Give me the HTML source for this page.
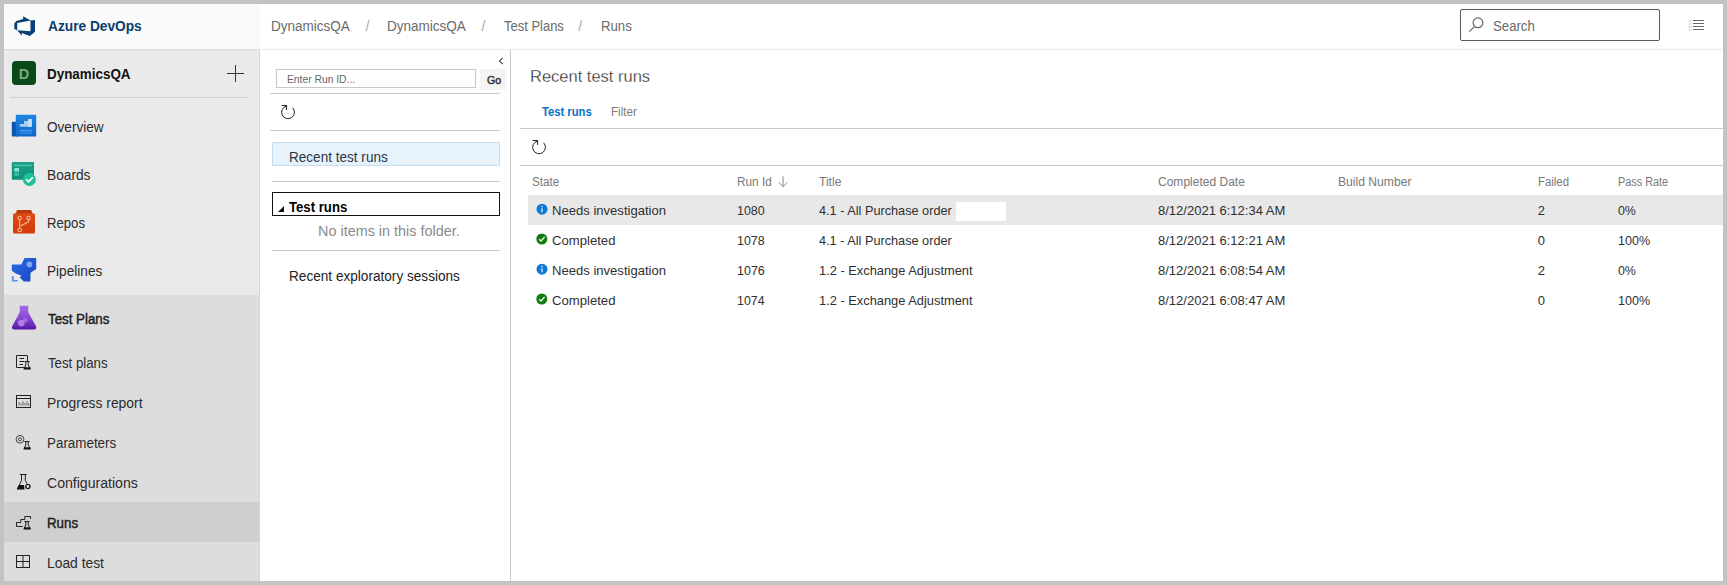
<!DOCTYPE html>
<html><head><meta charset="utf-8"><title>Runs - Test Plans</title>
<style>
html,body{margin:0;padding:0;}
body{width:1727px;height:585px;position:relative;overflow:hidden;background:#c3c3c3;font-family:"Liberation Sans",sans-serif;}
.a{position:absolute;}
.t{position:absolute;white-space:pre;line-height:24px;transform-origin:0 0;font-family:"Liberation Sans",sans-serif;}
svg{position:absolute;overflow:visible;}

</style></head><body>
<!-- page bg -->
<div class="a" style="left:4px;top:4px;width:1719px;height:577px;background:#fff"></div>
<!-- header -->
<div class="a" style="left:4px;top:4px;width:256px;height:45px;background:#fafafa"></div>
<div class="a" style="left:4px;top:49px;width:1719px;height:1px;background:#ececec"></div>
<!-- sidebar -->
<div class="a" style="left:4px;top:50px;width:256px;height:531px;background:#eaeaea"></div>
<div class="a" style="left:4px;top:295px;width:256px;height:286px;background:#dddddd"></div>
<div class="a" style="left:4px;top:502px;width:256px;height:40px;background:#cfcfcf"></div>
<div class="a" style="left:10px;top:97px;width:238px;height:1px;background:#d2d2d2"></div>
<div class="a" style="left:4px;top:49px;width:256px;height:1px;background:#dcdcdc"></div>
<div class="a" style="left:4px;top:50px;width:256px;height:1px;background:#e7e7e7"></div>
<div class="a" style="left:4px;top:51px;width:256px;height:1px;background:#ededed"></div>
<div class="a" style="left:259px;top:50px;width:1px;height:531px;background:#d6d6d6"></div>
<!-- D avatar -->
<div class="a" style="left:12px;top:61px;width:24px;height:24px;background:#0a4a1a;border-radius:4px"></div>

<!-- plus -->
<div class="a" style="left:227px;top:72.5px;width:17px;height:1px;background:#333"></div>
<div class="a" style="left:235px;top:64.5px;width:1px;height:17px;background:#333"></div>

<!-- left pane -->
<div class="a" style="left:510px;top:50px;width:1px;height:531px;background:#c8c8c8"></div>
<div class="a" style="left:276px;top:69px;width:198px;height:17px;border:1px solid #c8c8c8;background:#fff"></div>
<div class="a" style="left:480px;top:69px;width:26px;height:21px;background:#f4f4f4"></div>
<div class="a" style="left:270px;top:93px;width:230px;height:1px;background:#c8c8c8"></div>
<div class="a" style="left:270px;top:130px;width:230px;height:1px;background:#c8c8c8"></div>
<div class="a" style="left:272px;top:142px;width:226px;height:22px;border:1px solid #c4def3;background:#e7f2fb"></div>
<div class="a" style="left:272px;top:181px;width:228px;height:1px;background:#c8c8c8"></div>
<div class="a" style="left:272px;top:192px;width:226px;height:22px;border:1px solid #111;background:#fff"></div>
<div class="a" style="left:272px;top:250px;width:228px;height:1px;background:#c8c8c8"></div>
<!-- tree triangle -->
<svg style="left:278px;top:206px" width="6" height="6" viewBox="0 0 6 6"><path d="M6 0V6H0Z" fill="#111"/></svg>
<!-- chevron -->
<svg style="left:498px;top:56.5px" width="6" height="8" viewBox="0 0 6 8"><path d="M4.7 0.9L1.5 4L4.7 7.1" fill="none" stroke="#444" stroke-width="1.1"/></svg>

<!-- main -->
<div class="a" style="left:520px;top:128px;width:1203px;height:1px;background:#c8c8c8"></div>
<div class="a" style="left:520px;top:165px;width:1203px;height:1px;background:#c8c8c8"></div>
<div class="a" style="left:528px;top:195px;width:1195px;height:30px;background:#e8e8e8"></div>
<div class="a" style="left:956px;top:202px;width:50px;height:19px;background:#fff"></div>

<!-- search -->
<div class="a" style="left:1460px;top:9px;width:198px;height:30px;border:1px solid #5a5a5a;border-radius:2px;background:#fff"></div>
<!-- Azure DevOps logo -->
<svg style="left:12.5px;top:14.5px" width="23.3" height="22.1" viewBox="0 0 18 18" preserveAspectRatio="none"><path fill="#0a3f78" d="M17 4v9.74l-4 3.28-6.2-2.26V17l-3.51-4.59 10.23.8V4.44zm-3.41.49L7.85 1v2.29L2.58 4.84 1 6.87v4.61l2.26 1V6.57z"/></svg>

<!-- full-page icon layer (page coordinates) -->
<svg style="left:0;top:0" width="1727" height="585" viewBox="0 0 1727 585">
<defs>
<linearGradient id="gOv" x1="0" y1="0" x2="0" y2="1"><stop offset="0" stop-color="#1e86e2"/><stop offset="1" stop-color="#0f66c6"/></linearGradient>
<linearGradient id="gBd" x1="0" y1="0" x2="0" y2="1"><stop offset="0" stop-color="#19a086"/><stop offset="1" stop-color="#0f9078"/></linearGradient>
<linearGradient id="gRp" x1="0" y1="0" x2="0" y2="1"><stop offset="0" stop-color="#dc4a14"/><stop offset="1" stop-color="#d43c0a"/></linearGradient>
<linearGradient id="gPl" x1="0" y1="0" x2="1" y2="1"><stop offset="0" stop-color="#2d6be6"/><stop offset="1" stop-color="#1644c4"/></linearGradient>
<linearGradient id="gTp" x1="0" y1="0" x2="0" y2="1"><stop offset="0" stop-color="#a36ae6"/><stop offset="0.55" stop-color="#8546d2"/><stop offset="1" stop-color="#5815a6"/></linearGradient>
</defs>
<!-- Overview -->
<rect x="11.8" y="121.8" width="6" height="14.8" rx="0.8" fill="#0f57ae"/>
<rect x="15.8" y="114.8" width="20.4" height="21.8" rx="0.8" fill="url(#gOv)"/>
<path d="M19.8 126.8V124H24V121H28V119H31.8V126.8Z" fill="#a6d0f6"/>
<rect x="28" y="119" width="3.8" height="7.8" fill="#c6e0fa"/>
<rect x="19.8" y="129.8" width="12" height="1.6" fill="#4a9ae8"/>
<rect x="19.8" y="132.4" width="12" height="1.4" fill="#3a8ee2"/>
<!-- Boards -->
<rect x="11.8" y="162" width="22.2" height="17.8" rx="0.8" fill="url(#gBd)"/>
<rect x="13.8" y="164.4" width="18.4" height="2" fill="#3fc2a4"/>
<rect x="14.3" y="168" width="4.7" height="3.6" fill="#84e4cc"/>
<rect x="14.3" y="172.7" width="4.7" height="3" fill="#3cbea0"/>
<circle cx="29.4" cy="179.5" r="6.5" fill="#1fc09c"/>
<path d="M26.2 179.4L28.5 181.7L32.9 177.3" fill="none" stroke="#fff" stroke-width="1.7"/>
<!-- Repos -->
<path d="M16.5 211.2Q16.8 210 18 210H30.2Q31.4 210 31.7 211.2L32.5 214H15.7Z" fill="#b93a0c"/>
<rect x="13" y="213.2" width="22" height="20.4" rx="1.6" fill="url(#gRp)"/>
<g fill="none" stroke="#f6b494" stroke-width="1.1">
<circle cx="19.6" cy="218" r="1.7"/><circle cx="28.5" cy="218" r="1.7"/><circle cx="19.7" cy="230" r="1.8"/>
<path d="M19.6 219.8V228.2M28.5 219.8V221.8L20.4 226"/>
</g>
<!-- Pipelines -->
<path d="M24.5 257.9H36.2V269L30.6 272.7L30.3 281.6H23.8L19.8 277.6L21.4 275.8L15.8 273.6L11.8 270.8V264.4H21.4Z" fill="url(#gPl)"/>
<circle cx="29.4" cy="264.4" r="2.8" fill="#86aaf2"/>
<path d="M11.8 276H13.7V280H17.7V281.6H11.8Z" fill="#5f8fec"/>
<!-- Test Plans flask -->
<path d="M19.8 305.8H28.2V312L36 326.2Q37 329.5 33.8 329.5H14.4Q11.2 329.5 12.2 326.2L19.8 312Z" fill="url(#gTp)"/>
<circle cx="21.3" cy="323.2" r="3.3" fill="#c9a2f2" opacity="0.7"/>
<circle cx="25.2" cy="320.2" r="2.3" fill="#b78cec" opacity="0.6"/>
<!-- sub icons -->
<g fill="none" stroke="#222" stroke-width="1">
<!-- test plans -->
<path d="M24 367.5H16.5V355.5H27.5V361"/>
<path d="M19.5 358.5H24M19.5 361.5H24M19.5 364.5H23"/>
<path d="M24.4 361.5H29.6M25.8 361.5V365L24 368.5M28.2 361.5V365L30.4 368.5"/>
<!-- progress -->
<rect x="16.5" y="395.5" width="14" height="12"/>
<path d="M16.5 398.5H30.5"/>
<path d="M19 405.5V402M21 405.5V403.5M23 405.5V401.5M25 405.5V403M27 405.5V401.5M28.6 405.5V403.5" stroke="#666"/>
<!-- parameters -->
<circle cx="20" cy="439.3" r="3.9" stroke="#333" stroke-width="0.9"/>
<circle cx="20" cy="439.3" r="1.5" stroke="#333" stroke-width="0.9"/>
<path d="M24.4 441.5H29.6M25.8 441.5V445L24 448.5M28.2 441.5V445L30.4 448.5"/>
<!-- configurations -->
<path d="M19.8 474.5H26.8M21.5 474.5V480.5L17.4 489M25.3 474.5V480.5L27 483.5"/>
<circle cx="27.9" cy="486.5" r="2.1" stroke-width="1.4"/>
<!-- runs -->
<path d="M30.5 519V516.5H24.8V519.5H20.8V522.5H16.5V526.5H22.7"/>
<path d="M24.4 521.5H29.6M25.8 521.5V525L24 528.5M28.2 521.5V525L30.4 528.5"/>
<!-- load test -->
<rect x="16.5" y="555.5" width="13" height="12"/>
<path d="M23 555.5V567.5M16.5 561.5H29.5"/>
</g>
<!-- filled flask bottoms -->
<path d="M24.4 367.2H30L30.9 369.6H23.5Z" fill="#111"/>
<path d="M24.4 447.2H30L30.9 449.6H23.5Z" fill="#111"/>
<path d="M24.4 527.2H30L30.9 529.6H23.5Z" fill="#111"/>
<path d="M18.8 485H24L24.6 489.6H16.8Z" fill="#111"/>

<!-- refresh icons -->
<g fill="none" stroke="#222" stroke-width="1">
<path d="M537.4 141.1A6.4 6.4 0 1 0 543.6 142.8"/>
<path d="M532.7 140.5H537.6V145"/>
<path d="M286.4 106.1A6.4 6.4 0 1 0 292.6 107.8"/>
<path d="M281.7 105.5H286.6V110"/>
</g>
<!-- status icons -->
<circle cx="542" cy="209.2" r="5.5" fill="#0f78d4"/>
<rect x="541.3" y="208.3" width="1.4" height="4" fill="#cfe4f8"/><rect x="541.3" y="205.8" width="1.4" height="1.4" fill="#cfe4f8"/>
<circle cx="542" cy="269.2" r="5.5" fill="#0f78d4"/>
<rect x="541.3" y="268.3" width="1.4" height="4" fill="#cfe4f8"/><rect x="541.3" y="265.8" width="1.4" height="1.4" fill="#cfe4f8"/>
<circle cx="541.8" cy="239" r="5.5" fill="#107c10"/>
<path d="M539.2 239.2L541 241L544.6 237" fill="none" stroke="#e8f4e8" stroke-width="1.3"/>
<circle cx="541.8" cy="299" r="5.5" fill="#107c10"/>
<path d="M539.2 299.2L541 301L544.6 297" fill="none" stroke="#e8f4e8" stroke-width="1.3"/>
<!-- sort arrow -->
<path d="M783 176.2V186.5M778.6 182.4L783 186.7L787.4 182.4" fill="none" stroke="#8a8a8a" stroke-width="1"/>
<!-- search magnifier -->
<g fill="none" stroke="#666" stroke-width="1.2">
<circle cx="1478" cy="22.8" r="4.9"/><path d="M1474.6 26.4L1469.3 31.6"/>
</g>
<!-- list icon -->
<path d="M1693 20.5H1704M1693 23.5H1704M1693 26.5H1704M1693 29.5H1704" stroke="#666" stroke-width="1"/>
<path d="M1688.5 20.5L1689.8 21.6L1691.6 19.4M1688.5 23.5L1689.8 24.6L1691.6 22.4M1688.5 26.5L1689.8 27.6L1691.6 25.4M1688.5 29.5L1689.8 30.6L1691.6 28.4" fill="none" stroke="#aebccc" stroke-width="0.9"/>
</svg>

<!-- text -->
<span class="t" style="left:47.59px;top:14px;font-size:14px;font-weight:700;color:#0b3d6e;transform:scaleX(0.9796)">Azure DevOps</span>
<span class="t" style="left:47.20px;top:62px;font-size:14px;font-weight:700;color:#111;transform:scaleX(0.9585)">DynamicsQA</span>
<span class="t" style="left:18.83px;top:62px;font-size:14.5px;font-weight:700;color:#7aab85;transform:scaleX(1.0000)">D</span>
<span class="t" style="left:47.16px;top:115px;font-size:14px;font-weight:400;color:#2b2b2b;transform:scaleX(0.9698)">Overview</span>
<span class="t" style="left:46.66px;top:163px;font-size:14px;font-weight:400;color:#2b2b2b;transform:scaleX(0.9798)">Boards</span>
<span class="t" style="left:46.71px;top:211px;font-size:14px;font-weight:400;color:#2b2b2b;transform:scaleX(0.9384)">Repos</span>
<span class="t" style="left:46.67px;top:259px;font-size:14px;font-weight:400;color:#2b2b2b;transform:scaleX(0.9729)">Pipelines</span>
<span class="t" style="left:47.70px;top:307px;font-size:14px;font-weight:400;-webkit-text-stroke:0.45px #1e1e1e;color:#1e1e1e;transform:scaleX(0.9507)">Test Plans</span>
<span class="t" style="left:47.53px;top:351px;font-size:14px;font-weight:400;color:#2b2b2b;transform:scaleX(0.9453)">Test plans</span>
<span class="t" style="left:46.65px;top:391px;font-size:14px;font-weight:400;color:#2b2b2b;transform:scaleX(0.9896)">Progress report</span>
<span class="t" style="left:46.69px;top:431px;font-size:14px;font-weight:400;color:#2b2b2b;transform:scaleX(0.9567)">Parameters</span>
<span class="t" style="left:47.08px;top:471px;font-size:14px;font-weight:400;color:#2b2b2b;transform:scaleX(1.0055)">Configurations</span>
<span class="t" style="left:47.03px;top:511px;font-size:14px;font-weight:400;-webkit-text-stroke:0.45px #1e1e1e;color:#1e1e1e;transform:scaleX(0.9498)">Runs</span>
<span class="t" style="left:46.65px;top:551px;font-size:14px;font-weight:400;color:#2b2b2b;transform:scaleX(0.9888)">Load test</span>
<span class="t" style="left:270.98px;top:14px;font-size:14px;font-weight:400;color:#6a6a6a;transform:scaleX(0.9647)">DynamicsQA</span>
<span class="t" style="left:365.40px;top:14px;font-size:14px;font-weight:400;color:#a8a8a8;transform:scaleX(1.0000)">/</span>
<span class="t" style="left:387.18px;top:14px;font-size:14px;font-weight:400;color:#6a6a6a;transform:scaleX(0.9647)">DynamicsQA</span>
<span class="t" style="left:481.60px;top:14px;font-size:14px;font-weight:400;color:#a8a8a8;transform:scaleX(1.0000)">/</span>
<span class="t" style="left:503.54px;top:14px;font-size:14px;font-weight:400;color:#6a6a6a;transform:scaleX(0.9267)">Test Plans</span>
<span class="t" style="left:578.30px;top:14px;font-size:14px;font-weight:400;color:#a8a8a8;transform:scaleX(1.0000)">/</span>
<span class="t" style="left:600.50px;top:14px;font-size:14px;font-weight:400;color:#6a6a6a;transform:scaleX(0.9425)">Runs</span>
<span class="t" style="left:1493.11px;top:14px;font-size:14px;font-weight:400;color:#6a6a6a;transform:scaleX(0.9424)">Search</span>
<span class="t" style="left:287.14px;top:67px;font-size:11px;font-weight:400;color:#666;transform:scaleX(0.9365)">Enter Run ID...</span>
<span class="t" style="left:487.28px;top:68px;font-size:11px;font-weight:400;-webkit-text-stroke:0.45px #333;color:#333;transform:scaleX(0.9685)">Go</span>
<span class="t" style="left:288.87px;top:145px;font-size:14px;font-weight:400;color:#2a3644;transform:scaleX(0.9688)">Recent test runs</span>
<span class="t" style="left:289.15px;top:195px;font-size:14px;font-weight:700;color:#000;transform:scaleX(0.9396)">Test runs</span>
<span class="t" style="left:317.50px;top:219px;font-size:14px;font-weight:400;color:#8a8a8a;transform:scaleX(1.0293)">No items in this folder.</span>
<span class="t" style="left:288.87px;top:264px;font-size:14px;font-weight:400;color:#222;transform:scaleX(0.9719)">Recent exploratory sessions</span>
<span class="t" style="left:529.79px;top:64px;font-size:17.4px;font-weight:400;-webkit-text-stroke:0.3px #fff;color:#2c2c2c;transform:scaleX(0.9481)">Recent test runs</span>
<span class="t" style="left:541.98px;top:100px;font-size:12px;font-weight:700;color:#0a72ca;transform:scaleX(0.9352)">Test runs</span>
<span class="t" style="left:611.35px;top:100px;font-size:12px;font-weight:400;color:#7a7a7a;transform:scaleX(0.9691)">Filter</span>
<span class="t" style="left:531.94px;top:170px;font-size:12px;font-weight:400;color:#787878;transform:scaleX(0.9733)">State</span>
<span class="t" style="left:736.74px;top:170px;font-size:12px;font-weight:400;color:#787878;transform:scaleX(0.9833)">Run Id</span>
<span class="t" style="left:819.15px;top:170px;font-size:12px;font-weight:400;color:#787878;transform:scaleX(1.0051)">Title</span>
<span class="t" style="left:1157.98px;top:170px;font-size:12px;font-weight:400;color:#787878;transform:scaleX(1.0017)">Completed Date</span>
<span class="t" style="left:1337.92px;top:170px;font-size:12px;font-weight:400;color:#787878;transform:scaleX(1.0112)">Build Number</span>
<span class="t" style="left:1537.77px;top:170px;font-size:12px;font-weight:400;color:#787878;transform:scaleX(0.9503)">Failed</span>
<span class="t" style="left:1617.61px;top:170px;font-size:12px;font-weight:400;color:#787878;transform:scaleX(0.9052)">Pass Rate</span>
<span class="t" style="left:551.89px;top:199px;font-size:13px;font-weight:400;color:#303030;transform:scaleX(1.0049)">Needs investigation</span>
<span class="t" style="left:737.36px;top:199px;font-size:13px;font-weight:400;color:#303030;transform:scaleX(0.9571)">1080</span>
<span class="t" style="left:819.32px;top:199px;font-size:13px;font-weight:400;color:#303030;transform:scaleX(0.9775)">4.1 - All Purchase order</span>
<span class="t" style="left:1158.01px;top:199px;font-size:13px;font-weight:400;color:#303030;transform:scaleX(1.0007)">8/12/2021 6:12:34 AM</span>
<span class="t" style="left:1537.75px;top:199px;font-size:13px;font-weight:400;color:#303030;transform:scaleX(1.0000)">2</span>
<span class="t" style="left:1617.89px;top:199px;font-size:13px;font-weight:400;color:#303030;transform:scaleX(0.9501)">0%</span>
<span class="t" style="left:552.14px;top:229px;font-size:13px;font-weight:400;color:#303030;transform:scaleX(1.0092)">Completed</span>
<span class="t" style="left:737.36px;top:229px;font-size:13px;font-weight:400;color:#303030;transform:scaleX(0.9590)">1078</span>
<span class="t" style="left:819.32px;top:229px;font-size:13px;font-weight:400;color:#303030;transform:scaleX(0.9775)">4.1 - All Purchase order</span>
<span class="t" style="left:1158.01px;top:229px;font-size:13px;font-weight:400;color:#303030;transform:scaleX(1.0007)">8/12/2021 6:12:21 AM</span>
<span class="t" style="left:1537.87px;top:229px;font-size:13px;font-weight:400;color:#303030;transform:scaleX(1.0000)">0</span>
<span class="t" style="left:1617.56px;top:229px;font-size:13px;font-weight:400;color:#303030;transform:scaleX(0.9657)">100%</span>
<span class="t" style="left:551.89px;top:259px;font-size:13px;font-weight:400;color:#303030;transform:scaleX(1.0049)">Needs investigation</span>
<span class="t" style="left:737.36px;top:259px;font-size:13px;font-weight:400;color:#303030;transform:scaleX(0.9603)">1076</span>
<span class="t" style="left:818.74px;top:259px;font-size:13px;font-weight:400;color:#303030;transform:scaleX(0.9880)">1.2 - Exchange Adjustment</span>
<span class="t" style="left:1158.01px;top:259px;font-size:13px;font-weight:400;color:#303030;transform:scaleX(1.0007)">8/12/2021 6:08:54 AM</span>
<span class="t" style="left:1537.75px;top:259px;font-size:13px;font-weight:400;color:#303030;transform:scaleX(1.0000)">2</span>
<span class="t" style="left:1617.89px;top:259px;font-size:13px;font-weight:400;color:#303030;transform:scaleX(0.9501)">0%</span>
<span class="t" style="left:552.14px;top:289px;font-size:13px;font-weight:400;color:#303030;transform:scaleX(1.0092)">Completed</span>
<span class="t" style="left:737.37px;top:289px;font-size:13px;font-weight:400;color:#303030;transform:scaleX(0.9511)">1074</span>
<span class="t" style="left:818.74px;top:289px;font-size:13px;font-weight:400;color:#303030;transform:scaleX(0.9880)">1.2 - Exchange Adjustment</span>
<span class="t" style="left:1158.01px;top:289px;font-size:13px;font-weight:400;color:#303030;transform:scaleX(1.0007)">8/12/2021 6:08:47 AM</span>
<span class="t" style="left:1537.87px;top:289px;font-size:13px;font-weight:400;color:#303030;transform:scaleX(1.0000)">0</span>
<span class="t" style="left:1617.56px;top:289px;font-size:13px;font-weight:400;color:#303030;transform:scaleX(0.9657)">100%</span>
</body></html>
